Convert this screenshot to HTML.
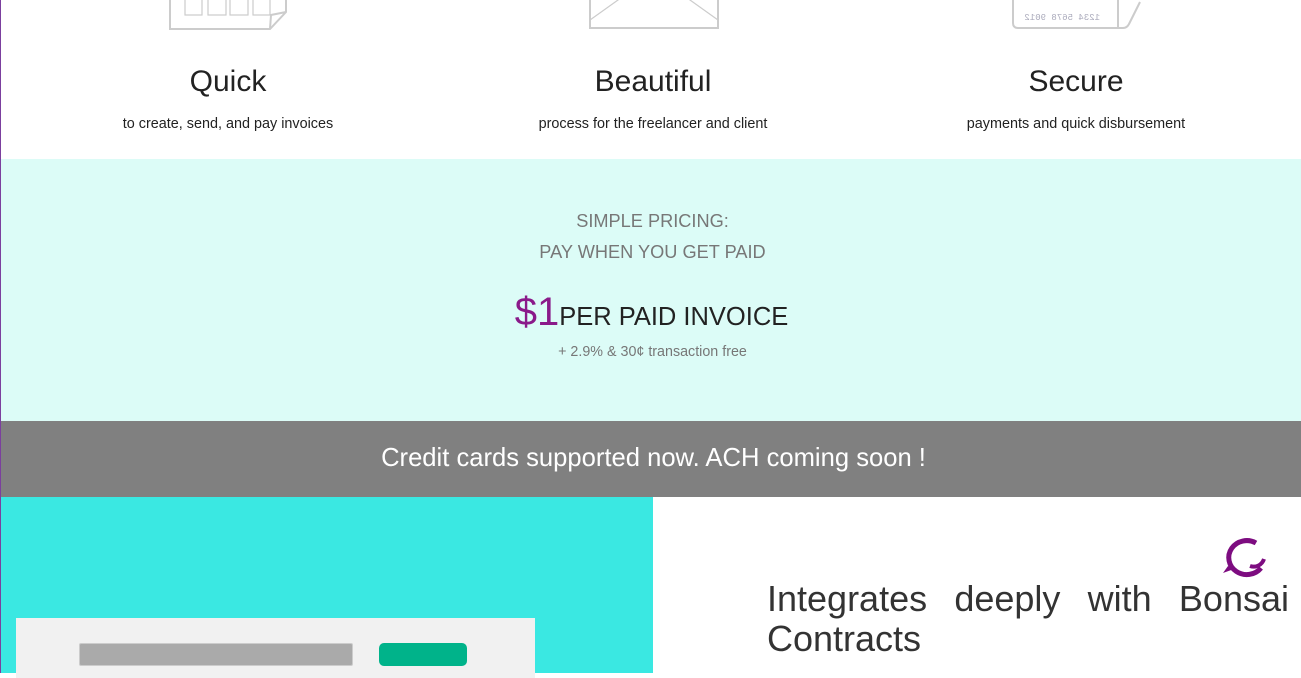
<!DOCTYPE html>
<html><head><meta charset="utf-8">
<style>
*{margin:0;padding:0;box-sizing:border-box}
body{width:1301px;height:673px;overflow:hidden;font-family:"Liberation Sans",sans-serif;background:#fff;position:relative}
.abs{position:absolute}
.t{text-align:center;color:#222}
</style></head><body>
<svg class="abs" style="left:165px;top:-10px" width="130" height="45">
<g fill="none" stroke="#ccc" stroke-width="2">
<path d="M5 0 V39 H105 L121 22 V0"/>
<rect x="20" y="0" width="17" height="25" stroke-width="1.2"/><rect x="43" y="0" width="18" height="25" stroke-width="1.2"/><rect x="65" y="0" width="18" height="25" stroke-width="1.2"/><rect x="88" y="0" width="17" height="25" stroke-width="1.2"/>
<path d="M105 39 L106 25 L121 22"/></g></svg>
<svg class="abs" style="left:585px;top:-10px" width="140" height="45">
<g fill="none" stroke="#ccc" stroke-width="2"><path d="M5 0 V38 H133 V0"/><path d="M5 30 L40 5 M133 30 L98 5" stroke-width="1.2"/></g></svg>
<svg class="abs" style="left:1005px;top:-10px" width="140" height="45">
<g fill="none" stroke="#ccc" stroke-width="2"><path d="M8 0 V33 Q8 38 13 38 H118 Q122 38 124 34 L135 12"/><path d="M113 38 V0"/><rect x="22" y="0" width="55" height="8" stroke-width="1"/></g>
<text x="45" y="30" font-size="9" fill="#aab" transform="scale(-1,1) translate(-140,0)" font-family="Liberation Mono">1234 5678 9012</text></svg>

<div class="abs t" style="left:28px;width:400px;top:65px;font-size:30px">Quick</div>
<div class="abs t" style="left:28px;width:400px;top:116px;font-size:14.4px">to create, send, and pay invoices</div>
<div class="abs t" style="left:453px;width:400px;top:65px;font-size:30px">Beautiful</div>
<div class="abs t" style="left:453px;width:400px;top:116px;font-size:14.4px">process for the freelancer and client</div>
<div class="abs t" style="left:876px;width:400px;top:65px;font-size:30px">Secure</div>
<div class="abs t" style="left:876px;width:400px;top:116px;font-size:14.4px">payments and quick disbursement</div>

<div class="abs" style="left:0;top:159px;width:1301px;height:262px;background:#dcfcf7">
<div class="t" style="position:absolute;left:0;width:1305px;top:47px;font-size:18.2px;color:#777;line-height:31px">SIMPLE PRICING:<br>PAY WHEN YOU GET PAID</div>
<div class="t" style="position:absolute;left:0;width:1303px;top:131px;font-size:25.5px;color:#222"><span style="color:#8a1a8a;font-size:40px">$1</span>PER PAID INVOICE</div>
<div class="t" style="position:absolute;left:0;width:1305px;top:185px;font-size:14.3px;color:#777">+ 2.9% &amp; 30¢ transaction free</div>
</div>
<div class="abs t" style="left:0;top:421px;width:1307px;height:76px;background:#808080;color:#fff;font-size:25.6px;line-height:74px">Credit cards supported now. ACH coming soon !</div>

<div class="abs" style="left:0;top:497px;width:653px;height:176px;background:#3ae8e2">
<div class="abs" style="left:16px;top:121px;width:519px;height:60px;background:#f1f1f1">
<div class="abs" style="left:63px;top:25px;width:274px;height:23px;background:#aaa;border:1px solid #ccc;border-radius:2px"></div>
<div class="abs" style="left:363px;top:25px;width:88px;height:23px;background:#00b38a;border-radius:5px"></div>
</div></div>
<div class="abs" style="left:0;top:0;width:1px;height:673px;background:#7b3f9e"></div>

<svg class="abs" style="left:1220px;top:535px" width="50" height="48">
<path d="M36 8 A18 17 0 1 0 41 33" fill="none" stroke="#7d0c80" stroke-width="5"/>
<path d="M8 31 L3 38 L14 34 Z" fill="#7d0c80"/>
<path d="M30 31 C36 33 42 30 44 24" fill="none" stroke="#7d0c80" stroke-width="4"/>
</svg>
<div class="abs" style="left:767px;top:579px;width:522px;font-size:36px;color:#333;line-height:40px;text-align:justify;text-align-last:left">Integrates deeply with Bonsai Contracts</div>
</body></html>
